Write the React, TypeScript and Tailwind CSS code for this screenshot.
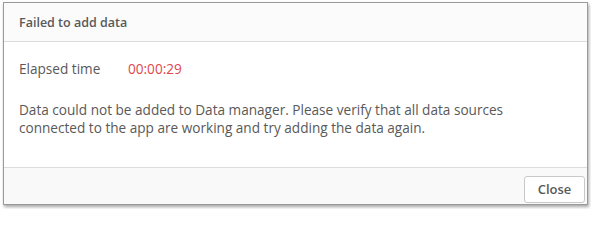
export default function App() {
  return (
    <div className="h-[209px] w-[591px] bg-white pl-[3px] pt-[2px]" style={{ fontFamily: '"Open Sans", "Liberation Sans", sans-serif' }}>
      <div className="flex h-[203px] w-[585px] flex-col border border-[#9a9a9a] bg-white shadow-[1px_2px_3px_rgba(0,0,0,0.35)]">
        <div className="flex h-[39px] items-center border-b border-[#dcdcdc] bg-[#fbfbfb] px-[15px] pt-[3px]">
          <span className="text-[12.5px] font-semibold text-[#595959]">Failed to add data</span>
        </div>
        <div className="flex-1 px-[15px] pt-[17px] text-[13.6px] text-[#595959]">
          <div className="flex items-center">
            <span className="w-[109px]">Elapsed time</span>
            <span className="text-[#e0474c]">00:00:29</span>
          </div>
          <p className="mt-[22px] leading-[18px]">
            Data could not be added to Data manager. Please verify that all data sources
            <br />
            connected to the app are working and try adding the data again.
          </p>
        </div>
        <div className="flex h-[37px] items-end justify-end border-t border-[#dcdcdc] bg-[#f9f9f9] pb-[1px] pr-[2px]">
          <button className="h-[27px] w-[61px] rounded-[3px] border border-[#c9c9c9] bg-white text-[13px] font-semibold text-[#595959]">
            Close
          </button>
        </div>
      </div>
    </div>
  )
}
